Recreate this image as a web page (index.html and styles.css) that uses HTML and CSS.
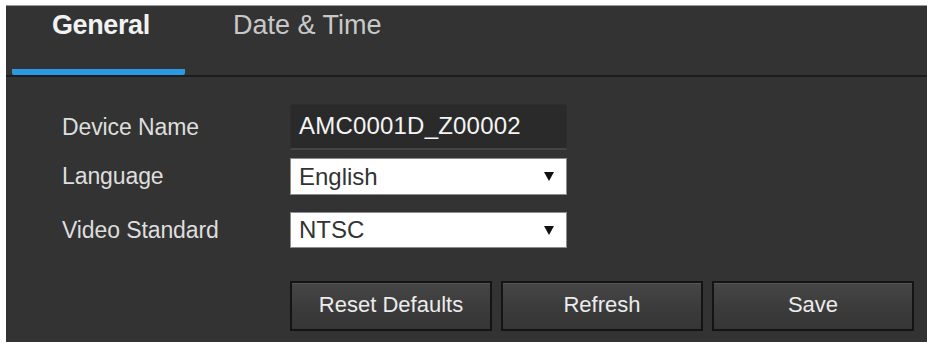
FILE: index.html
```html
<!DOCTYPE html>
<html>
<head>
<meta charset="utf-8">
<link rel="stylesheet" href="styles.css">
</head>
<body>
<div class="panel">
  <div class="tabs">
    <div class="tab tab-active">General</div>
    <div class="tab tab-second">Date &amp; Time</div>
  </div>
  <div class="form">
    <div class="row row-name">
      <div class="label">Device Name</div>
      <div class="textbox">AMC0001D_Z00002</div>
    </div>
    <div class="row row-lang">
      <div class="label">Language</div>
      <div class="select"><span>English</span><svg class="arrow" width="10" height="9" viewBox="0 0 10 9"><path d="M0 0H10L5 9Z" fill="#111"/></svg></div>
    </div>
    <div class="row row-video">
      <div class="label">Video Standard</div>
      <div class="select"><span>NTSC</span><svg class="arrow" width="10" height="9" viewBox="0 0 10 9"><path d="M0 0H10L5 9Z" fill="#111"/></svg></div>
    </div>
    <div class="buttons">
      <div class="btn">Reset Defaults</div>
      <div class="btn">Refresh</div>
      <div class="btn">Save</div>
    </div>
  </div>
</div>
</body>
</html>
```
FILE: styles.css
```css
html, body {
  margin: 0;
  padding: 0;
  background: #ffffff;
}
body {
  font-family: "Liberation Sans", Arial, sans-serif;
}
.panel {
  margin: 5px 2px 0 6px;
  height: 337px;
  box-sizing: border-box;
  background: #333333;
  border-top: 1px solid #9a9a9a;
  display: flex;
  flex-direction: column;
}
.tabs {
  display: flex;
  height: 71px;
  box-sizing: border-box;
  border-bottom: 2px solid #1d1d1d;
  padding-left: 6px;
}
.tab {
  height: 69px;
  box-sizing: border-box;
  padding-top: 4px;
  font-size: 27px;
  line-height: 31px;
  color: #c8c8c8;
}
.tab-active {
  width: 173px;
  padding-left: 40px;
  font-weight: bold;
  color: #f2f2f2;
  letter-spacing: -0.4px;
  border-bottom: 6px solid #2b9ae2;
  border-radius: 0 0 2px 2px;
}
.tab-second {
  padding-left: 48px;
}
.form {
  padding-left: 56px;
  display: flex;
  flex-direction: column;
}
.row {
  display: flex;
  align-items: center;
}
.row-name {
  margin-top: 27px;
  height: 46px;
}
.row-lang {
  margin-top: 8px;
  height: 37px;
}
.row-video {
  margin-top: 17px;
  height: 36px;
}
.label {
  width: 228px;
  font-size: 23px;
  color: #dedede;
  letter-spacing: -0.1px;
}
.textbox {
  width: 277px;
  height: 46px;
  box-sizing: border-box;
  background: #2a2a2a;
  border: 1px solid #2e2e2e;
  border-bottom: 2px solid #444;
  padding-left: 8px;
  font-size: 24px;
  line-height: 42px;
  color: #f4f4f4;
  letter-spacing: 0.2px;
}
.select {
  width: 277px;
  height: 100%;
  box-sizing: border-box;
  background: #ffffff;
  border: 1px solid #8c8c8c;
  padding: 0 12px 0 8px;
  display: flex;
  align-items: center;
  justify-content: space-between;
  font-size: 24px;
  color: #333;
}
.arrow {
  display: block;
}
.buttons {
  margin-top: 33px;
  margin-left: 228px;
  display: flex;
  gap: 9px;
}
.btn {
  width: 202px;
  height: 50px;
  box-sizing: border-box;
  border: 2px solid #141414;
  background: linear-gradient(#464646, #3a3a3a 60%, #363636);
  box-shadow: inset 0 1px 0 #555;
  display: flex;
  align-items: center;
  justify-content: center;
  padding-bottom: 2px;
  font-size: 22px;
  color: #ececec;
}
```
